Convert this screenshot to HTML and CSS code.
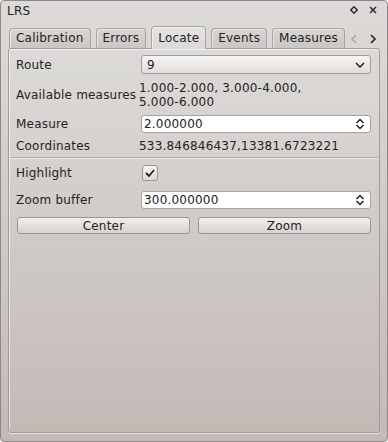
FILE: index.html
```html
<!DOCTYPE html>
<html lang="en">

<head>
  <meta charset="UTF-8">
  <meta name="viewport" content="width=device-width, initial-scale=1.0">
  <title>LRS</title>
  <link rel="stylesheet" href="styles.css">
</head>

<body>

  <div class="window">
    <div class="titlebar">
      <span class="title">LRS</span>
      <div class="title-buttons">
        <svg width="8" height="8" viewBox="0 0 8 8"><path d="M4 0.8 L7.2 4 L4 7.2 L0.8 4 Z" fill="none" stroke="#2a2a2a" stroke-width="1.4"/></svg>
        <svg width="8" height="8" viewBox="0 0 8 8"><path d="M1 1 L7 7 M7 1 L1 7" stroke="#2a2a2a" stroke-width="1.5"/></svg>
      </div>
    </div>

    <div class="tabbar">
      <div class="tabs">
        <div class="tab">Calibration</div>
        <div class="tab">Errors</div>
        <div class="tab active">Locate</div>
        <div class="tab">Events</div>
        <div class="tab">Measures</div>
      </div>
      <div class="tab-arrows">
        <svg width="8" height="10" viewBox="0 0 8 10"><path d="M6 1 L2 5 L6 9" fill="none" stroke="#aaa5a3" stroke-width="1.6"/></svg>
        <svg width="8" height="10" viewBox="0 0 8 10"><path d="M2 1 L6 5 L2 9" fill="none" stroke="#222" stroke-width="1.6"/></svg>
      </div>
    </div>

    <div class="panel">
      <div class="row row-route">
        <div class="label">Route</div>
        <div class="field combo">
          <span>9</span>
          <svg width="10" height="6" viewBox="0 0 10 6"><path d="M1 1 L5 5 L9 1" fill="none" stroke="#222" stroke-width="1.5"/></svg>
        </div>
      </div>

      <div class="row row-available">
        <div class="label">Available measures</div>
        <div class="field value multi">1.000-2.000, 3.000-4.000,<br>5.000-6.000</div>
      </div>

      <div class="row row-measure">
        <div class="label">Measure</div>
        <div class="field spin">
          <span>2.000000</span>
          <svg width="10" height="12" viewBox="0 0 10 12"><path d="M1.5 5 L5 1.5 L8.5 5 M1.5 7 L5 10.5 L8.5 7" fill="none" stroke="#222" stroke-width="1.5"/></svg>
        </div>
      </div>

      <div class="row row-coords">
        <div class="label">Coordinates</div>
        <div class="field value">533.846846437,13381.6723221</div>
      </div>

      <div class="separator"></div>

      <div class="row row-highlight">
        <div class="label">Highlight</div>
        <div class="field">
          <div class="checkbox">
            <svg width="12" height="10" viewBox="0 0 12 10"><path d="M2 5 L5 8 L10 2" fill="none" stroke="#222" stroke-width="1.8"/></svg>
          </div>
        </div>
      </div>

      <div class="row row-zoom">
        <div class="label">Zoom buffer</div>
        <div class="field spin">
          <span>300.000000</span>
          <svg width="10" height="12" viewBox="0 0 10 12"><path d="M1.5 5 L5 1.5 L8.5 5 M1.5 7 L5 10.5 L8.5 7" fill="none" stroke="#222" stroke-width="1.5"/></svg>
        </div>
      </div>

      <div class="buttons">
        <div class="button">Center</div>
        <div class="button">Zoom</div>
      </div>
    </div>
  </div>

</body>

</html>
```

FILE: styles.css
```css
body {
  margin: 0;
  font-family: "DejaVu Sans", sans-serif;
  font-size: 12px;
  letter-spacing: 0.2px;
  color: #232323;
}

.window {
  width: 388px;
  height: 442px;
  box-sizing: border-box;
  border: 1px solid #8e8886;
  border-radius: 4px;
  background: linear-gradient(#dcdad8, #c3bab7);
  display: flex;
  flex-direction: column;
}

.titlebar {
  height: 21px;
  display: flex;
  align-items: center;
  justify-content: space-between;
  padding: 0 10px 0 6px;
}

.title {
  line-height: 21px;
}

.title-buttons {
  display: flex;
  gap: 11px;
  margin-top: -3px;
}

.tabbar {
  height: 26px;
  display: flex;
  justify-content: space-between;
  align-items: flex-end;
  padding: 0 10px 0 8px;
}

.tabs {
  display: flex;
  align-items: flex-end;
  gap: 5px;
}

.tab {
  height: 19px;
  line-height: 19px;
  padding: 0 6px;
  border: 1px solid #aaa3a0;
  border-bottom: 0;
  border-radius: 4px 4px 0 0;
  background: linear-gradient(#d8d5d3, #cac6c3);
  box-shadow: inset 1px 1px 0 rgba(255, 255, 255, .5);
}

.tab.active {
  height: 22px;
  line-height: 23px;
  margin-bottom: -1px;
  position: relative;
  z-index: 1;
  background: linear-gradient(#e6e4e2, #dcdad8);
}

.tab-arrows {
  display: flex;
  gap: 11px;
  align-self: center;
  margin-top: 8px;
}

.panel {
  flex: 1;
  margin: 0 7px 8px;
  padding: 6px 8px 0 7px;
  border: 1px solid #a39b98;
  border-radius: 3px;
  background: linear-gradient(#dcdad8, #c3bab6);
  box-shadow: inset 1px 1px 0 rgba(255, 255, 255, .55), 0 1px 0 rgba(255, 255, 255, .6);
}

.row {
  display: flex;
  align-items: center;
}

.label {
  width: 125px;
  flex: none;
}

.field {
  flex: 1;
}

.row-route {
  height: 19px;
}

.row-available {
  height: 28px;
  margin-top: 7px;
}

.row-measure {
  height: 18px;
  margin-top: 6px;
}

.row-coords {
  height: 16px;
  margin-top: 5px;
}

.row-highlight {
  height: 16px;
  margin-top: 6px;
}

.row-zoom {
  height: 18px;
  margin-top: 10px;
}

.value {
  margin-left: -2px;
}

.multi {
  line-height: 14px;
}

.combo {
  height: 19px;
  box-sizing: border-box;
  border: 1px solid #a39b98;
  border-radius: 3px;
  background: linear-gradient(#f4f3f2, #e1dfdd);
  display: flex;
  align-items: center;
  justify-content: space-between;
  padding: 0 5px 0 5px;
}

.spin {
  height: 18px;
  box-sizing: border-box;
  border: 1px solid #aaa2a0;
  border-radius: 3px;
  background: #fff;
  display: flex;
  align-items: center;
  justify-content: space-between;
  padding: 0 5px 0 2px;
}

.separator {
  height: 1px;
  margin: 3px -7px 0 -6px;
  background: #b0a8a5;
  border-bottom: 1px solid #ecebea;
}

.checkbox {
  width: 14px;
  height: 14px;
  margin-left: 1px;
  border: 1px solid #9d9593;
  border-radius: 3px;
  background: linear-gradient(#f6f5f4, #dcd9d7);
  display: flex;
  align-items: center;
  justify-content: center;
}

.buttons {
  display: flex;
  gap: 8px;
  margin: 8px 0 0 1px;
}

.button {
  flex: 1;
  height: 17px;
  line-height: 16px;
  box-sizing: border-box;
  text-align: center;
  border: 1px solid #9d9593;
  border-radius: 3px;
  background: linear-gradient(#f0efee, #d6d2d0);
}
```
